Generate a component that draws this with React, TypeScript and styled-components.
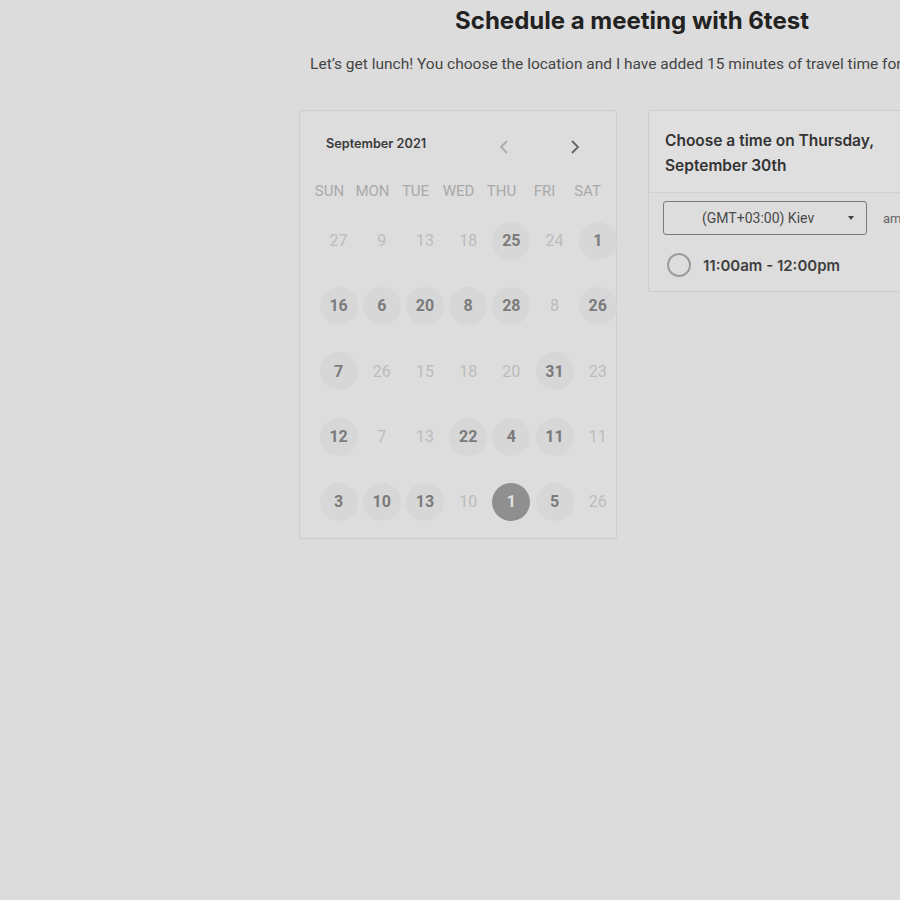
import React from "react";
import styled, { createGlobalStyle } from "styled-components";

const Global = createGlobalStyle`
  html, body { margin: 0; padding: 0; background: #dcdcdc; overflow: hidden; }
  * { box-sizing: border-box; }
`;

const Page = styled.div`
  width: 1264px;
  display: flex;
  flex-direction: column;
  align-items: center;
  padding-top: 4px;
`;

const Title = styled.h1`
  margin: 0;
  font-family: Inter, "Liberation Sans", sans-serif;
  font-weight: 700;
  font-size: 24px;
  line-height: 34px;
  color: #222;
  letter-spacing: 0;
`;

const Subtitle = styled.p`
  margin: 15px 0 0;
  font-family: Roboto, "Liberation Sans", sans-serif;
  font-size: 15.5px;
  line-height: 22px;
  color: #454545;
  white-space: nowrap;
`;

const Cards = styled.div`
  margin-top: 35px;
  display: flex;
  gap: 31px;
  align-items: flex-start;
`;

const Card = styled.div<{ $w: number }>`
  width: ${(p) => p.$w}px;
  border: 1px solid #cdcdcd;
  border-radius: 2px;
  background: #dddddd;
`;

const CalHeader = styled.div`
  height: 64px;
  display: flex;
  align-items: center;
  padding-left: 26px;
`;

const Month = styled.div`
  font-family: Inter, "Liberation Sans", sans-serif;
  font-weight: 600;
  font-size: 12.7px;
  color: #3a3a3a;
  width: 170px;
`;

const NavBtn = styled.button<{ $dim?: boolean }>`
  border: 0;
  background: transparent;
  padding: 0;
  margin-top: 8px;
  width: 16px;
  height: 16px;
  display: flex;
  align-items: center;
  justify-content: center;
  color: ${(p) => (p.$dim ? "#ababab" : "#666")};
`;

const NavGap = styled.div`
  width: 55px;
`;

const WeekRow = styled.div`
  display: grid;
  grid-template-columns: repeat(7, 43px);
  padding-left: 8px;
  height: 32px;
  align-items: center;
`;

const WeekDay = styled.div`
  text-align: center;
  font-family: Roboto, "Liberation Sans", sans-serif;
  font-size: 15px;
  color: #a9a9a9;
`;

const DayGrid = styled.div`
  display: grid;
  grid-template-columns: repeat(7, 43.2px);
  grid-auto-rows: 65.3px;
  padding-left: 17px;
  padding-bottom: 4px;
  padding-top: 1px;
`;

const DayCell = styled.div`
  display: flex;
  align-items: center;
  justify-content: center;
`;

const Day = styled.div<{ $kind: "off" | "on" | "sel" }>`
  width: 38px;
  height: 38px;
  border-radius: 50%;
  display: flex;
  align-items: center;
  justify-content: center;
  font-family: Roboto, "Liberation Sans", sans-serif;
  font-size: 16px;
  font-weight: ${(p) => (p.$kind === "off" ? 400 : 700)};
  color: ${(p) =>
    p.$kind === "off" ? "#bcbcbc" : p.$kind === "sel" ? "#e2e2e2" : "#7b7b7b"};
  background: ${(p) =>
    p.$kind === "off" ? "transparent" : p.$kind === "sel" ? "#8f8f8f" : "#d7d7d7"};
`;

const TimeHeader = styled.div`
  padding: 17px 16px 14px;
  border-bottom: 1px solid #d0d0d0;
  background: #dfdfdf;
  font-family: Inter, "Liberation Sans", sans-serif;
  font-weight: 600;
  font-size: 15.5px;
  line-height: 25px;
  color: #333;
`;

const Controls = styled.div`
  display: flex;
  align-items: center;
  padding: 8px 0 0 14px;
  gap: 16px;
`;

const Select = styled.div`
  width: 204px;
  height: 34px;
  border: 1px solid #7a7a7a;
  border-radius: 3px;
  display: flex;
  align-items: center;
  padding: 0 10px 0 38px;
  font-family: Roboto, "Liberation Sans", sans-serif;
  font-size: 14px;
  color: #4a4a4a;
`;

const SelectText = styled.span`
  flex: 1;
`;

const Caret = styled.span`
  width: 0;
  height: 0;
  border-left: 3.5px solid transparent;
  border-right: 3.5px solid transparent;
  border-top: 4px solid #444;
  margin-right: 2px;
`;

const Format = styled.span`
  font-family: Roboto, "Liberation Sans", sans-serif;
  font-size: 13px;
  color: #666;
  white-space: nowrap;
`;

const Slot = styled.div`
  display: flex;
  align-items: center;
  gap: 12px;
  padding: 18px 0 14px 18px;
`;

const Radio = styled.span`
  width: 24px;
  height: 24px;
  border-radius: 50%;
  border: 2px solid #9c9c9c;
`;

const SlotText = styled.span`
  font-family: Inter, "Liberation Sans", sans-serif;
  font-weight: 600;
  font-size: 15px;
  color: #3f3f3f;
`;

const Chevron = ({ dir }: { dir: "l" | "r" }) => (
  <svg width="10" height="16" viewBox="0 0 10 16">
    <polyline
      points={dir === "l" ? "8,2 2,8 8,14" : "2,2 8,8 2,14"}
      fill="none"
      stroke="currentColor"
      strokeWidth="1.8"
    />
  </svg>
);

type K = "off" | "on" | "sel";
const rows: [string, K][][] = [
  [["27","off"],["9","off"],["13","off"],["18","off"],["25","on"],["24","off"],["1","on"]],
  [["16","on"],["6","on"],["20","on"],["8","on"],["28","on"],["8","off"],["26","on"]],
  [["7","on"],["26","off"],["15","off"],["18","off"],["20","off"],["31","on"],["23","off"]],
  [["12","on"],["7","off"],["13","off"],["22","on"],["4","on"],["11","on"],["11","off"]],
  [["3","on"],["10","on"],["13","on"],["10","off"],["1","sel"],["5","on"],["26","off"]],
];

const weekdays = ["SUN", "MON", "TUE", "WED", "THU", "FRI", "SAT"];

export default function App() {
  return (
    <>
      <Global />
      <Page>
        <Title>Schedule a meeting with 6test</Title>
        <Subtitle>
          Let’s get lunch! You choose the location and I have added 15 minutes of travel time for you all.
        </Subtitle>
        <Cards>
          <Card $w={318}>
            <CalHeader>
              <Month>September 2021</Month>
              <NavBtn $dim aria-label="previous month">
                <Chevron dir="l" />
              </NavBtn>
              <NavGap />
              <NavBtn aria-label="next month">
                <Chevron dir="r" />
              </NavBtn>
            </CalHeader>
            <WeekRow>
              {weekdays.map((d) => (
                <WeekDay key={d}>{d}</WeekDay>
              ))}
            </WeekRow>
            <DayGrid>
              {rows.flat().map(([n, k], i) => (
                <DayCell key={i}>
                  <Day $kind={k}>{n}</Day>
                </DayCell>
              ))}
            </DayGrid>
          </Card>
          <Card $w={317}>
            <TimeHeader>
              Choose a time on Thursday,
              <br />
              September 30th
            </TimeHeader>
            <Controls>
              <Select>
                <SelectText>(GMT+03:00) Kiev</SelectText>
                <Caret />
              </Select>
              <Format>am/pm</Format>
            </Controls>
            <Slot>
              <Radio />
              <SlotText>11:00am - 12:00pm</SlotText>
            </Slot>
          </Card>
        </Cards>
      </Page>
    </>
  );
}
